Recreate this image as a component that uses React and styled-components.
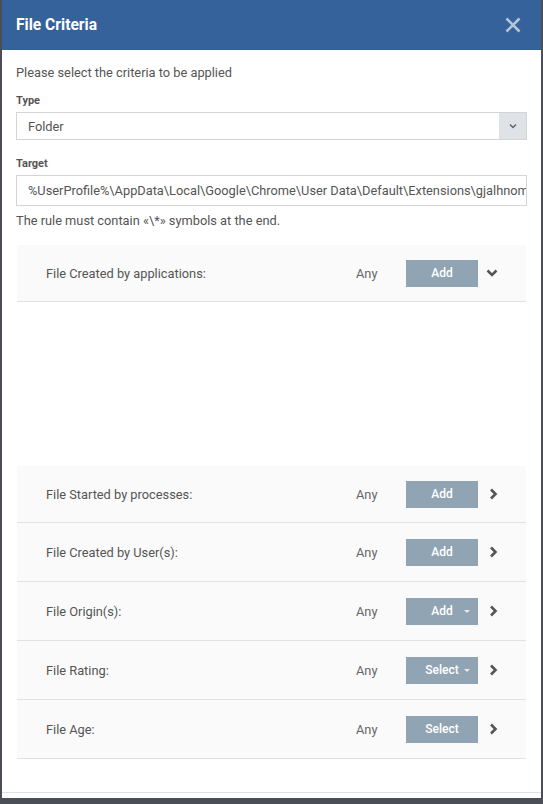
import React from "react";
import styled, { createGlobalStyle } from "styled-components";

const GlobalStyle = createGlobalStyle`
  html, body {
    margin: 0;
    padding: 0;
    background: #4b4e56;
    font-family: Roboto, "Liberation Sans", Arial, sans-serif;
  }
`;

const criteria = [
  { label: "File Started by processes:", action: "Add" },
  { label: "File Created by User(s):", action: "Add" },
  { label: "File Origin(s):", action: "Add", menu: true },
  { label: "File Rating:", action: "Select", menu: true },
  { label: "File Age:", action: "Select" },
];

function Chevron({ open }) {
  return open ? (
    <svg width="12" height="8" viewBox="0 0 12 8">
      <polyline
        points="1.5,1.5 6,6 10.5,1.5"
        fill="none"
        stroke="#555"
        strokeWidth="2.6"
      />
    </svg>
  ) : (
    <svg width="9" height="12" viewBox="0 0 9 12">
      <polyline
        points="2,1.5 6.5,6 2,10.5"
        fill="none"
        stroke="#555"
        strokeWidth="2.6"
      />
    </svg>
  );
}

function CriteriaRow({ label, action, menu, open }) {
  return (
    <Row>
      <RowLabel>{label}</RowLabel>
      <RowValue>Any</RowValue>
      <ActionButton>
        {action}
        {menu && <Caret />}
      </ActionButton>
      <ChevronBox>
        <Chevron open={open} />
      </ChevronBox>
    </Row>
  );
}

export default function App() {
  return (
    <>
      <GlobalStyle />
      <Page>
        <Dialog>
          <Header>
            <Title>File Criteria</Title>
            <CloseButton aria-label="close">
              <svg width="16" height="16" viewBox="0 0 16 16">
                <path
                  d="M1.5 1.5 L14.5 14.5 M14.5 1.5 L1.5 14.5"
                  stroke="#b7c6d8"
                  strokeWidth="2.6"
                  strokeLinecap="butt"
                />
              </svg>
            </CloseButton>
          </Header>

          <Body>
            <Intro>Please select the criteria to be applied</Intro>

            <FieldLabel>Type</FieldLabel>
            <SelectBox>
              <SelectValue>Folder</SelectValue>
              <SelectArrow>
                <svg width="8" height="6" viewBox="0 0 8 6">
                  <polyline
                    points="1,1.5 4,4.5 7,1.5"
                    fill="none"
                    stroke="#666"
                    strokeWidth="1.5"
                  />
                </svg>
              </SelectArrow>
            </SelectBox>

            <FieldLabel $top={17}>Target</FieldLabel>
            <TextBox>
              %UserProfile%\AppData\Local\Google\Chrome\User
              Data\Default\Extensions\gjalhnomhafafofonpdihihjnbafkipc\*
            </TextBox>
            <Hint>The rule must contain «\*» symbols at the end.</Hint>

            <CriteriaList>
              <CriteriaRow label="File Created by applications:" action="Add" open />
              <ExpandedPanel />
              {criteria.map((c) => (
                <CriteriaRow key={c.label} {...c} />
              ))}
            </CriteriaList>
          </Body>
          <Footer />
        </Dialog>
      </Page>
    </>
  );
}

const Page = styled.div`
  height: 804px;
  padding: 0 2px 0 2px;
  box-sizing: border-box;
`;

const Dialog = styled.div`
  width: 539px;
  height: 798px;
  background: #fff;
  display: flex;
  flex-direction: column;
`;

const Header = styled.div`
  height: 50px;
  flex-shrink: 0;
  background: #35629a;
  display: flex;
  align-items: center;
  justify-content: space-between;
  padding: 0 20px 0 14px;
`;

const Title = styled.h2`
  margin: 0;
  color: #fff;
  font-size: 15.6px;
  font-weight: 700;
`;

const CloseButton = styled.button`
  border: none;
  background: none;
  padding: 0;
  display: flex;
  cursor: pointer;
`;

const Body = styled.div`
  flex: 1;
  padding: 15px 14px 0 14px;
  border-bottom: 1px solid #dde2e7;
  display: flex;
  flex-direction: column;
  font-size: 12.8px;
`;

const Intro = styled.div`
  line-height: 16px;
  color: #555;
`;

const FieldLabel = styled.div`
  margin-top: ${(p) => p.$top ?? 13}px;
  font-size: 11px;
  line-height: 14px;
  font-weight: 700;
  color: #555;
`;

const SelectBox = styled.div`
  margin-top: 4px;
  height: 26px;
  border: 1px solid #d4d4d4;
  display: flex;
  align-items: stretch;
`;

const SelectValue = styled.div`
  flex: 1;
  display: flex;
  align-items: center;
  padding-left: 11px;
  color: #555;
`;

const SelectArrow = styled.div`
  width: 27px;
  background: #dfe3e7;
  display: flex;
  align-items: center;
  justify-content: center;
`;

const TextBox = styled.div`
  margin-top: 4px;
  height: 29px;
  border: 1px solid #d4d4d4;
  padding: 0 11px;
  display: flex;
  align-items: center;
  white-space: nowrap;
  overflow: hidden;
  color: #555;
`;

const Hint = styled.div`
  margin-top: 7px;
  line-height: 16px;
  color: #555;
`;

const CriteriaList = styled.div`
  margin: 16px 1px 0 1px;
  display: flex;
  flex-direction: column;
`;

const Row = styled.div`
  height: 56px;
  background: #fafafa;
  border-bottom: 1px solid #dde2e6;
  display: flex;
  align-items: center;
  padding: 0 28px 0 29px;
  color: #555;

  & + & {
    height: 58px;
  }
`;

const ExpandedPanel = styled.div`
  height: 164px;
  background: #fff;
`;

const RowLabel = styled.span`
  flex: 1;
`;

const RowValue = styled.span`
  width: 50px;
  color: #666;
`;

const ActionButton = styled.button`
  position: relative;
  width: 72px;
  height: 27px;
  border: none;
  background: #91a4b3;
  color: #fff;
  font-family: inherit;
  font-size: 12px;
  font-weight: 500;
  padding: 0;
`;

const Caret = styled.span`
  position: absolute;
  right: 8px;
  top: 12px;
  border-left: 3px solid transparent;
  border-right: 3px solid transparent;
  border-top: 3px solid #e6ebef;
`;

const ChevronBox = styled.span`
  width: 20px;
  display: flex;
  justify-content: flex-end;
`;

const Footer = styled.div`
  height: 5px;
  flex-shrink: 0;
`;
